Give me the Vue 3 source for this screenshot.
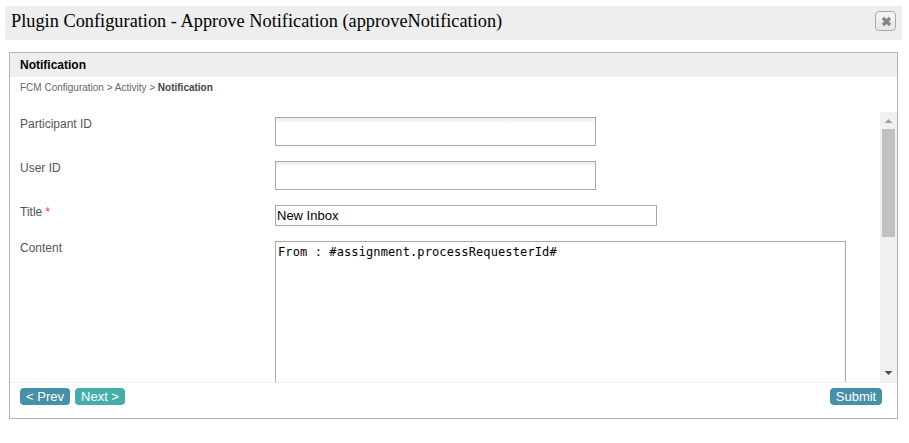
<script setup>
import { ref } from 'vue'

const title = ref('New Inbox')
const content = ref('From : #assignment.processRequesterId#')
</script>

<template>
  <div class="dialog">
    <header class="titlebar">
      <h1>Plugin Configuration - Approve Notification (approveNotification)</h1>
      <button class="close" aria-label="Close">
        <svg width="11" height="11" viewBox="0 0 11 11">
          <path d="M2 2 9 9M9 2 2 9" stroke="#858585" stroke-width="3.2" fill="none" />
        </svg>
      </button>
    </header>
    <section class="panel">
      <h2>Notification</h2>
      <nav class="crumbs"><span>FCM Configuration &gt; Activity &gt;&nbsp;</span><b>Notification</b></nav>
      <div class="body">
        <form class="form" @submit.prevent>
          <div class="row"><label>Participant ID</label><div class="combo"></div></div>
          <div class="row"><label>User ID</label><div class="combo"></div></div>
          <div class="row"><label>Title <i>*</i></label><div class="text">{{ title }}</div></div>
          <div class="row"><label>Content</label><div class="area">{{ content }}</div></div>
        </form>
        <div class="scrollbar">
          <svg class="arrow" width="17" height="17" viewBox="0 0 17 17"><path d="M4.5 11h8L8.5 7z" fill="#a3a3a3" /></svg>
          <div class="thumb"></div>
          <svg class="arrow" width="17" height="17" viewBox="0 0 17 17"><path d="M4.5 6h8L8.5 10z" fill="#505050" /></svg>
        </div>
      </div>
      <footer class="actions">
        <button class="btn prev"><span>&lt; Prev</span></button>
        <button class="btn next"><span>Next &gt;</span></button>
        <button class="btn submit"><span>Submit</span></button>
      </footer>
    </section>
  </div>
</template>

<style>
body { margin: 0; background: #fff; }
</style>

<style scoped>
* { box-sizing: border-box; }
.dialog {
  height: 443px;
  padding: 6px 7px 0 5px;
  overflow: hidden;
  font-family: "Liberation Sans", Arial, sans-serif;
  font-size: 12px;
  color: #555;
}
.titlebar {
  display: flex;
  align-items: flex-start;
  justify-content: space-between;
  height: 34px;
  padding: 5px 6px 0;
  background: #eee;
}
h1 {
  margin: 0;
  font: 400 18.3px/21px "Liberation Serif", serif;
  letter-spacing: .02px;
  white-space: nowrap;
  color: #000;
}
.close {
  display: flex;
  align-items: center;
  justify-content: center;
  width: 21px;
  height: 20px;
  padding: 1px 0 0 1px;
  border: 1px solid #aaa;
  border-radius: 4px;
  background: linear-gradient(#f3f3f3 50%, #e9e9e9 50%);
}
.close svg { display: block; }
.panel {
  display: flex;
  flex-direction: column;
  width: 889px;
  height: 367px;
  margin: 12px 0 0 4px;
  border: 1px solid #b5b5b5;
}
h2 {
  height: 24px;
  margin: 0;
  padding-left: 10px;
  background: #eee;
  color: #000;
  font-size: 12px;
  line-height: 24px;
}
.crumbs {
  display: flex;
  height: 35px;
  padding-left: 10px;
  font-size: 10px;
  line-height: 22px;
  color: #666;
}
.crumbs b { color: #444; }
.body { display: flex; height: 270px; }
.form {
  flex: 1;
  height: 270px;
  padding: 5px 0 0 10px;
  overflow: hidden;
}
.row { display: flex; margin-bottom: 15px; }
label { width: 255px; line-height: 14px; }
label i { color: #f33; font-style: normal; }
.combo, .text, .area { border: 1px solid #a9a9a9; background: #fff; color: #000; }
.combo {
  width: 321px;
  height: 29px;
  background: linear-gradient(#eee 1px, #fff 5px);
}
.text {
  width: 382px;
  height: 21px;
  padding-left: 1px;
  font-size: 13px;
  line-height: 19px;
}
.area {
  width: 571px;
  height: 220px;
  padding: 2px;
  font: 12px/16px "DejaVu Sans Mono", monospace;
  letter-spacing: .11px;
}
.scrollbar { width: 17px; height: 270px; background: #f0f0f0; display: flex; flex-direction: column; }
.arrow { display: block; }
.thumb { width: 13px; height: 108px; margin: 0 2px auto; background: #c1c1c1; }
.actions {
  display: flex;
  align-items: flex-start;
  flex: 1;
  gap: 5px;
  padding: 5px 15px 0 10px;
  border-top: 1px solid #eee;
}
.btn {
  height: 17px;
  padding: 0;
  border: 0;
  border-radius: 4px;
  color: #fff;
  font: 13px/17px "Liberation Sans", Arial, sans-serif;
  white-space: nowrap;
}
.prev, .submit { background: #4690aa; }
.prev, .next { width: 50px; }
.next { background: #46aea8; }
.submit { width: 52px; margin-left: auto; }
</style>
